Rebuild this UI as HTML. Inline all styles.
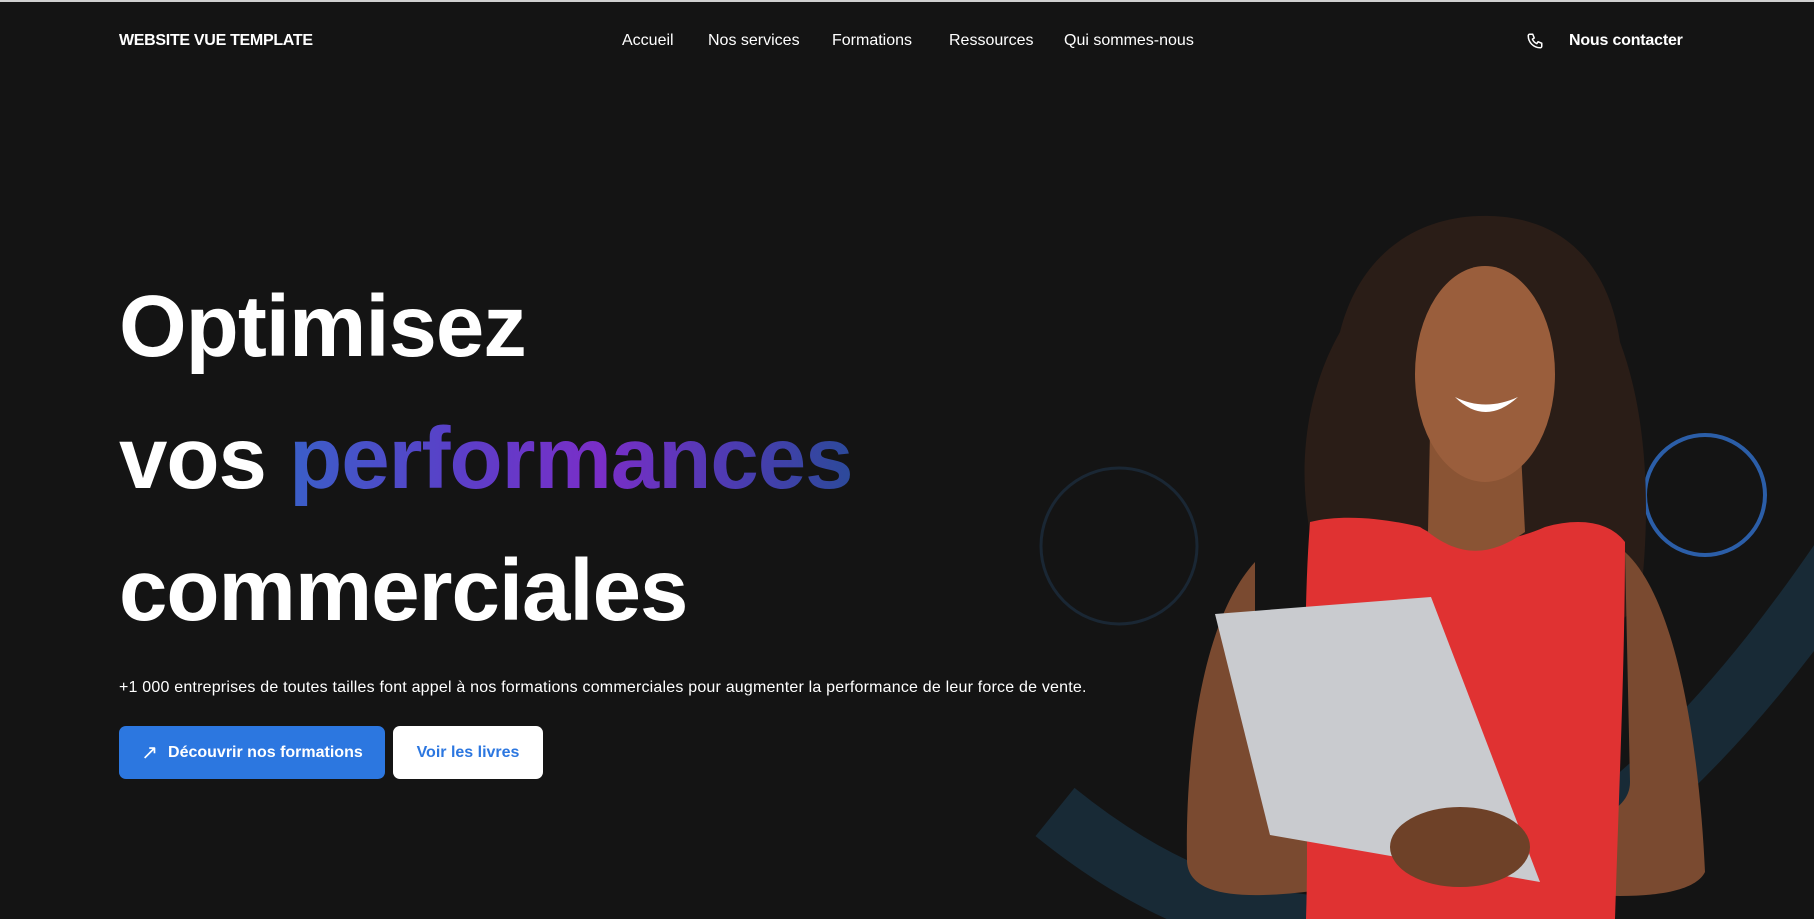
<!DOCTYPE html>
<html><head><meta charset="utf-8"><style>
*{margin:0;padding:0;box-sizing:border-box}
body{width:1814px;height:917px;background:#141414;overflow:hidden;position:relative;font-family:"Liberation Sans",sans-serif;color:#fff;border-top:2px solid #d0d0d0}
.a{position:absolute;white-space:nowrap}
.nav{font-size:16px;top:30px}
h1{position:absolute;left:119px;top:259px;font-size:87px;line-height:132px;font-weight:700;letter-spacing:-1px}
.g{background:linear-gradient(90deg,#3a5fc8,#5b3fc8 30%,#7a2ec8 55%,#4a3cb0 80%,#2c4a9a);-webkit-background-clip:text;background-clip:text;color:transparent}
.btn{position:absolute;top:724px;height:53px;border-radius:7px;font-size:16px;font-weight:700;display:flex;align-items:center;justify-content:center}
</style></head><body>
<svg class="a" style="left:0;top:0" width="1814" height="917">
<circle cx="1119" cy="544" r="78" fill="none" stroke="#1a2734" stroke-width="3"/>
<circle cx="1705" cy="493" r="60" fill="none" stroke="#2b5ea8" stroke-width="4"/>
<path d="M1055 810 Q1450 1130 1840 560" fill="none" stroke="#182a36" stroke-width="62"/>
<path d="M1330 600 C1290 500 1300 400 1340 330 C1360 250 1420 212 1490 214 C1570 216 1610 270 1620 340 C1650 420 1650 520 1640 600 C1600 650 1560 620 1560 600 L1420 600 C1380 640 1340 640 1330 600Z" fill="#2a1d17"/>
<path d="M1255 560 C1200 620 1185 760 1187 860 C1190 900 1260 900 1370 880 L1380 830 C1300 820 1260 800 1255 760Z" fill="#7a4a30"/>
<path d="M1625 550 C1680 600 1700 760 1705 870 C1690 900 1600 900 1480 880 L1480 830 C1560 830 1630 820 1630 780Z" fill="#7a4a30"/>
<path d="M1310 520 C1350 510 1400 520 1420 525 C1450 545 1500 545 1545 525 C1580 515 1610 520 1625 540 C1625 650 1620 760 1615 917 L1306 917 C1310 800 1300 650 1310 520Z" fill="#e03232"/>
<path d="M1430 430 L1520 430 L1525 530 C1490 555 1460 555 1428 530Z" fill="#8a5434"/>
<ellipse cx="1485" cy="372" rx="70" ry="108" fill="#9a5e3c"/>
<path d="M1455 395 Q1485 425 1518 395 Q1485 410 1455 395Z" fill="#fff"/>
<path d="M1215 612 L1431 595 L1540 880 L1270 833Z" fill="#c9cbcf"/>
<ellipse cx="1460" cy="845" rx="70" ry="40" fill="#6e4128"/>
</svg>
<div class="a" style="left:119px;top:30px;font-size:16px;font-weight:700;letter-spacing:-0.3px">WEBSITE VUE TEMPLATE</div>
<div class="a nav" style="left:622px">Accueil</div>
<div class="a nav" style="left:708px">Nos services</div>
<div class="a nav" style="left:832px">Formations</div>
<div class="a nav" style="left:949px">Ressources</div>
<div class="a nav" style="left:1064px">Qui sommes-nous</div>
<svg class="a" style="left:1526px;top:30px" width="18" height="18" viewBox="0 0 24 24" fill="none" stroke="#fff" stroke-width="2" stroke-linejoin="round"><path d="M5 3h4l2 5-2.5 1.5a11 11 0 0 0 6 6L16 13l5 2v4a2 2 0 0 1-2 2A16 16 0 0 1 3 5a2 2 0 0 1 2-2z"/></svg>
<div class="a nav" style="left:1569px;font-weight:700;letter-spacing:-0.2px">Nous contacter</div>
<h1>Optimisez<br>vos <span class="g">performances</span><br>commerciales</h1>
<div class="a" style="left:119px;top:677px;font-size:16px;letter-spacing:0.2px">+1 000 entreprises de toutes tailles font appel à nos formations commerciales pour augmenter la performance de leur force de vente.</div>
<div class="btn" style="left:119px;width:266px;background:#2c77e0;color:#fff"><span style="font-size:20px;margin-right:10px;font-weight:400">↗</span>Découvrir nos formations</div>
<div class="btn" style="left:393px;width:150px;background:#fff;color:#2c77e0">Voir les livres</div>
</body></html>
